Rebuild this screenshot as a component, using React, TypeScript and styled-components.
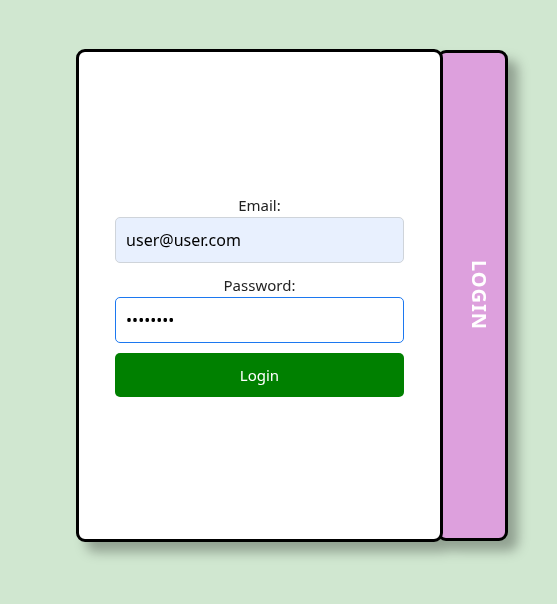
import React from "react";
import styled, { createGlobalStyle } from "styled-components";

const Global = createGlobalStyle`
  html, body {
    margin: 0;
    padding: 0;
    background: #d0e7d0;
    font-family: "Noto Sans", "Segoe UI", sans-serif;
  }
  * { box-sizing: border-box; }
`;

const Page = styled.div`
  width: 557px;
  height: 604px;
  padding: 49px 0 0 76px;
`;

const Group = styled.div`
  display: inline-flex;
  align-items: flex-start;
  filter: drop-shadow(10px 10px 6px rgba(0, 0, 0, 0.3));
`;

const Card = styled.div`
  position: relative;
  z-index: 1;
  width: 367px;
  height: 493px;
  background: #ffffff;
  border: 3px solid #000;
  border-radius: 9px;
  display: flex;
  align-items: center;
  justify-content: center;
`;

const Side = styled.div`
  width: 71px;
  height: 491px;
  margin-top: 1px;
  margin-left: -6px;
  background: #dda0dd;
  border: 3px solid #000;
  border-radius: 9px;
  display: flex;
  align-items: center;
  justify-content: center;
  padding-left: 13px;
`;

const SideText = styled.span`
  writing-mode: vertical-rl;
  color: #ffffff;
  font-weight: 700;
  font-size: 20px;
  letter-spacing: 1px;
`;

const Form = styled.form`
  width: 80%;
  display: flex;
  flex-direction: column;
  margin-top: -2px;
`;

const Label = styled.label<{ $gap?: boolean }>`
  display: block;
  text-align: center;
  font-size: 15px;
  line-height: 24px;
  color: #222;
  margin-top: ${(p) => (p.$gap ? "10px" : "0")};
`;

const Input = styled.input<{ $focused?: boolean; $filled?: boolean }>`
  width: 100%;
  height: 46px;
  padding: 0 10px;
  font-family: "Noto Sans", sans-serif;
  font-size: 16px;
  color: #000;
  border-radius: 5px;
  outline: none;
  border: 1px solid ${(p) => (p.$focused ? "#1c78f0" : "#cfd4da")};
  background: ${(p) => (p.$filled ? "#e8f0fe" : "#ffffff")};
`;

const Button = styled.button`
  margin-top: 10px;
  height: 44px;
  width: 100%;
  border: none;
  border-radius: 5px;
  background: #008000;
  color: #ffffff;
  font-family: "Noto Sans", sans-serif;
  font-size: 15px;
`;

export default function App() {
  return (
    <>
      <Global />
      <Page>
        <Group>
          <Card>
            <Form onSubmit={(e) => e.preventDefault()}>
              <Label>Email:</Label>
              <Input type="email" defaultValue="user@user.com" $filled />
              <Label $gap>Password:</Label>
              <Input type="password" defaultValue="12345678" $focused />
              <Button type="submit">Login</Button>
            </Form>
          </Card>
          <Side>
            <SideText>LOGIN</SideText>
          </Side>
        </Group>
      </Page>
    </>
  );
}
